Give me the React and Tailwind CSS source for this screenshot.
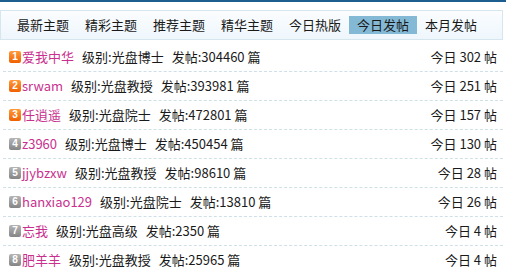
import React from "react";

const tabs = ["最新主题", "精彩主题", "推荐主题", "精华主题", "今日热版", "今日发帖", "本月发帖"];
const rows = [
  ["爱我中华", "光盘博士", "304460", "302"],
  ["srwam", "光盘教授", "393981", "251"],
  ["任逍遥", "光盘院士", "472801", "157"],
  ["z3960", "光盘博士", "450454", "130"],
  ["jjybzxw", "光盘教授", "98610", "28"],
  ["hanxiao129", "光盘院士", "13810", "26"],
  ["忘我", "光盘高级", "2350", "4"],
  ["肥羊羊", "光盘教授", "25965", "4"],
];

function Badge({ n }) {
  const hot = n <= 3;
  return (
    <span
      className={
        "inline-flex w-[12px] h-[12px] rounded-[2px] items-center justify-center text-[10px] leading-none text-white font-bold mr-[1px] " +
        (hot
          ? "bg-[linear-gradient(#ff9a3a,#f06000)]"
          : "bg-[linear-gradient(#b5b5b5,#858585)]")
      }
      style={{ fontFamily: "'Liberation Sans', sans-serif" }}
    >
      {n}
    </span>
  );
}

export default function App() {
  return (
    <div
      className="w-[506px] h-[271px] bg-white overflow-hidden text-[13px] text-[#1a1a1a]"
      style={{ fontFamily: "'Noto Sans CJK SC', sans-serif" }}
    >
      <div className="h-[2px] bg-[#1d5e8e]" />
      <div className="pt-[8px] pr-[3px]">
        <div className="h-[30px] border border-[#d6e6ef] bg-[linear-gradient(#fbfdff,#eef6fc)] flex items-center pl-[8px]">
          {tabs.map((t) => (
            <span
              key={t}
              className={
                "px-[8px] h-[18px] leading-[18px] " +
                (t === "今日发帖" ? "bg-[#84b9d6]" : "")
              }
            >
              {t}
            </span>
          ))}
        </div>
      </div>
      <div className="pt-[3px] px-[3px]">
        {rows.map((r, i) => (
          <div
            key={i}
            className="h-[29px] flex items-center border-b border-dashed border-[#cfe1e6] pl-[6px] pr-[6px]"
          >
            <Badge n={i + 1} />
            <span className="text-[#c9308e]">{r[0]}</span>
            <span className="ml-[8px]">级别:{r[1]}</span>
            <span className="ml-[8px]">发帖:{r[2]} 篇</span>
            <span className="ml-auto">今日 {r[3]} 帖</span>
          </div>
        ))}
      </div>
    </div>
  );
}
